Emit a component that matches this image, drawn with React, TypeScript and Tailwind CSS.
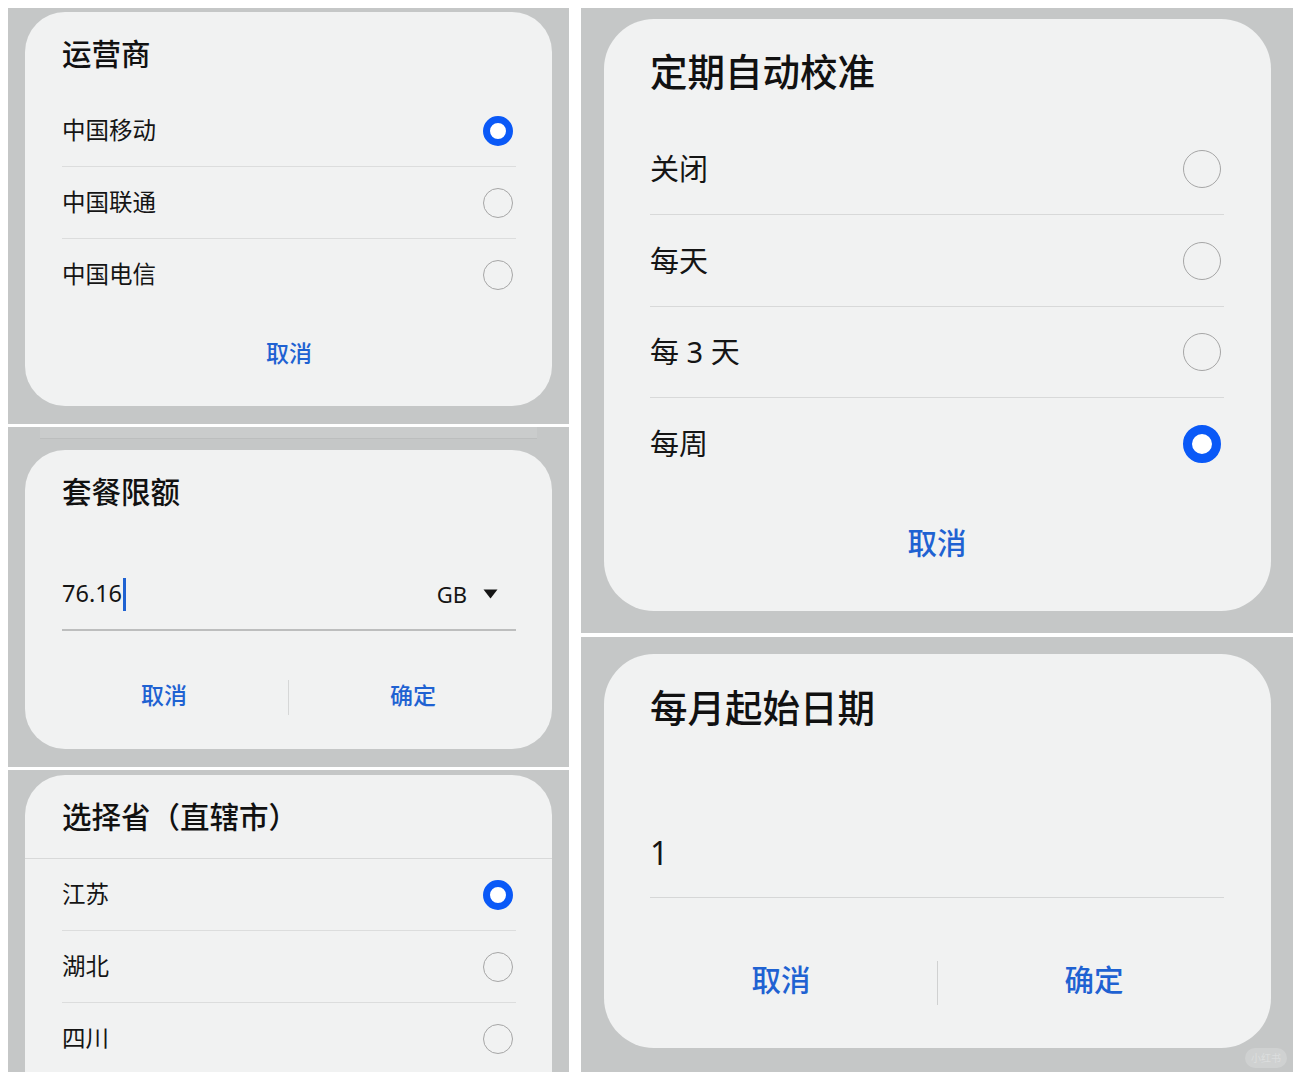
import React from "react";

const FONT = { fontFamily: '"Noto Sans", "Noto Sans CJK SC", sans-serif' };

function Radio({ size, selected }: { size: "sm" | "lg"; selected?: boolean }) {
  if (size === "sm") {
    return selected ? (
      <div className="w-[30px] h-[30px] rounded-full border-[7px] border-[#0a59f7] bg-white mr-[3px] shrink-0" />
    ) : (
      <div className="w-[30px] h-[30px] rounded-full border-[1.5px] border-[#a6a6a6] mr-[3px] shrink-0" />
    );
  }
  return selected ? (
    <div className="w-[38px] h-[38px] rounded-full border-[9px] border-[#0a59f7] bg-white mr-[3px] shrink-0" />
  ) : (
    <div className="w-[38px] h-[38px] rounded-full border-[1.5px] border-[#a6a6a6] mr-[3px] shrink-0" />
  );
}

function SmallRow({ label, selected, divider }: { label: string; selected?: boolean; divider?: boolean }) {
  return (
    <div className={`h-[72px] flex items-center justify-between ${divider ? "border-b border-[#dcdddd]" : ""}`}>
      <span className="text-[23.5px] text-[#151515]">{label}</span>
      <Radio size="sm" selected={selected} />
    </div>
  );
}

function LargeRow({ label, selected, divider, h }: { label: string; selected?: boolean; divider?: boolean; h: string }) {
  return (
    <div className={`${h} flex items-center justify-between ${divider ? "border-b border-[#d8d9d9]" : ""}`}>
      <span className="text-[29px] text-[#151515]">{label}</span>
      <Radio size="lg" selected={selected} />
    </div>
  );
}

export default function App() {
  return (
    <div className="w-[1302px] h-[1080px] bg-white flex gap-[12px] pl-[8px] pt-[8px] overflow-hidden" style={FONT}>
      {/* Left column */}
      <div className="w-[561px] flex flex-col gap-[3px]">
        {/* 运营商 */}
        <div className="h-[416px] bg-[#c5c7c7] pl-[17px] pr-[17px] pt-[4px]">
          <div className="h-[394px] bg-[#f1f2f2] rounded-[40px] pl-[37px] pr-[36px] pt-[22px]">
            <div className="h-[40px] leading-[40px] text-[29.5px] font-medium text-[#111]">运营商</div>
            <div className="mt-[21px]">
              <SmallRow label="中国移动" selected divider />
              <SmallRow label="中国联通" divider />
              <SmallRow label="中国电信" />
            </div>
            <div className="mt-[22px] h-[40px] flex items-center justify-center text-[23px] font-medium text-[#1f62d2]">
              取消
            </div>
          </div>
        </div>

        {/* 套餐限额 */}
        <div className="h-[340px] bg-[#c5c7c7] pl-[17px] pr-[17px]">
          <div className="h-[12px] mx-[15px] bg-[#cacccc] border-b border-[#bcbebe]" />
          <div className="mt-[11px] h-[299px] bg-[#f1f2f2] rounded-[40px] pt-[22px]">
            <div className="pl-[37px] h-[40px] leading-[40px] text-[29.5px] font-medium text-[#111]">套餐限额</div>
            <div className="ml-[37px] mr-[36px] mt-[58px] pb-[11px] border-b-2 border-[#bdbebe]">
              <div className="h-[48px] flex items-center justify-between">
                <div className="flex items-center">
                  <span className="text-[23.5px] text-[#151515]">76.16</span>
                  <span className="w-[3px] h-[33px] bg-[#1f62d2] ml-[1px]" />
                </div>
                <div className="flex items-center gap-[16px] mr-[18px]">
                  <span className="text-[22px] text-[#151515]">GB</span>
                  <svg width="15" height="10" viewBox="0 0 15 10">
                    <path d="M0.5 0.5 L14.5 0.5 L7.5 9.5 Z" fill="#151515" />
                  </svg>
                </div>
              </div>
            </div>
            <div className="mt-[44px] h-[40px] mx-[15px] flex items-center">
              <div className="flex-1 text-center text-[23px] font-medium text-[#1f62d2]">取消</div>
              <div className="w-px h-[35px] bg-[#d6d7d7] mt-[4px]" />
              <div className="flex-1 text-center text-[23px] font-medium text-[#1f62d2]">确定</div>
            </div>
          </div>
        </div>

        {/* 选择省（直辖市） */}
        <div className="h-[302px] bg-[#c5c7c7] pl-[17px] pr-[17px] pt-[5px] overflow-hidden">
          <div className="h-[340px] bg-[#f1f2f2] rounded-t-[40px] pt-[22px]">
            <div className="pl-[37px] h-[40px] leading-[40px] text-[29.5px] font-medium text-[#111]">选择省（直辖市）</div>
            <div className="mt-[21px] border-b border-[#d8d9d9]" />
            <div className="pl-[37px] pr-[36px]">
              <SmallRow label="江苏" selected divider />
              <SmallRow label="湖北" divider />
              <SmallRow label="四川" />
            </div>
          </div>
        </div>
      </div>

      {/* Right column */}
      <div className="w-[712px] flex flex-col gap-[4px]">
        {/* 定期自动校准 */}
        <div className="h-[625px] bg-[#c5c7c7] pl-[23px] pr-[22px] pt-[11px]">
          <div className="h-[592px] bg-[#f1f2f2] rounded-[50px] pl-[46px] pr-[47px] pt-[33px]">
            <div className="h-[40px] leading-[40px] text-[37.5px] font-medium text-[#111]">定期自动校准</div>
            <div className="mt-[32px]">
              <LargeRow h="h-[91px]" label="关闭" divider />
              <LargeRow h="h-[92px]" label="每天" divider />
              <LargeRow h="h-[91px]" label="每 3 天" divider />
              <LargeRow h="h-[92px]" label="每周" selected />
            </div>
            <div className="mt-[33px] h-[40px] flex items-center justify-center text-[29.5px] font-medium text-[#1f62d2]">
              取消
            </div>
          </div>
        </div>

        {/* 每月起始日期 */}
        <div className="relative h-[435px] bg-[#c5c7c7] pl-[23px] pr-[22px] pt-[17px]">
          <div className="h-[394px] bg-[#f1f2f2] rounded-[50px] pt-[34px]">
            <div className="pl-[46px] h-[40px] leading-[40px] text-[37.5px] font-medium text-[#111]">每月起始日期</div>
            <div className="ml-[46px] mr-[47px] mt-[101px] pb-[20px] border-b border-[#d6d7d7]">
              <div className="h-[48px] flex items-center text-[32px] text-[#151515]">1</div>
            </div>
            <div className="mt-[62px] h-[40px] mx-[21px] flex items-center">
              <div className="flex-1 text-center text-[29.5px] font-medium text-[#1f62d2]">取消</div>
              <div className="w-px h-[44px] bg-[#d0d1d1] mt-[5px]" />
              <div className="flex-1 text-center text-[29.5px] font-medium text-[#1f62d2]">确定</div>
            </div>
          </div>
          <div className="absolute right-[6px] bottom-[4px] w-[42px] h-[20px] rounded-full bg-[#cfd1d1] flex items-center justify-center text-[10px] text-[#dcdede]">
            小红书
          </div>
        </div>
      </div>
    </div>
  );
}
